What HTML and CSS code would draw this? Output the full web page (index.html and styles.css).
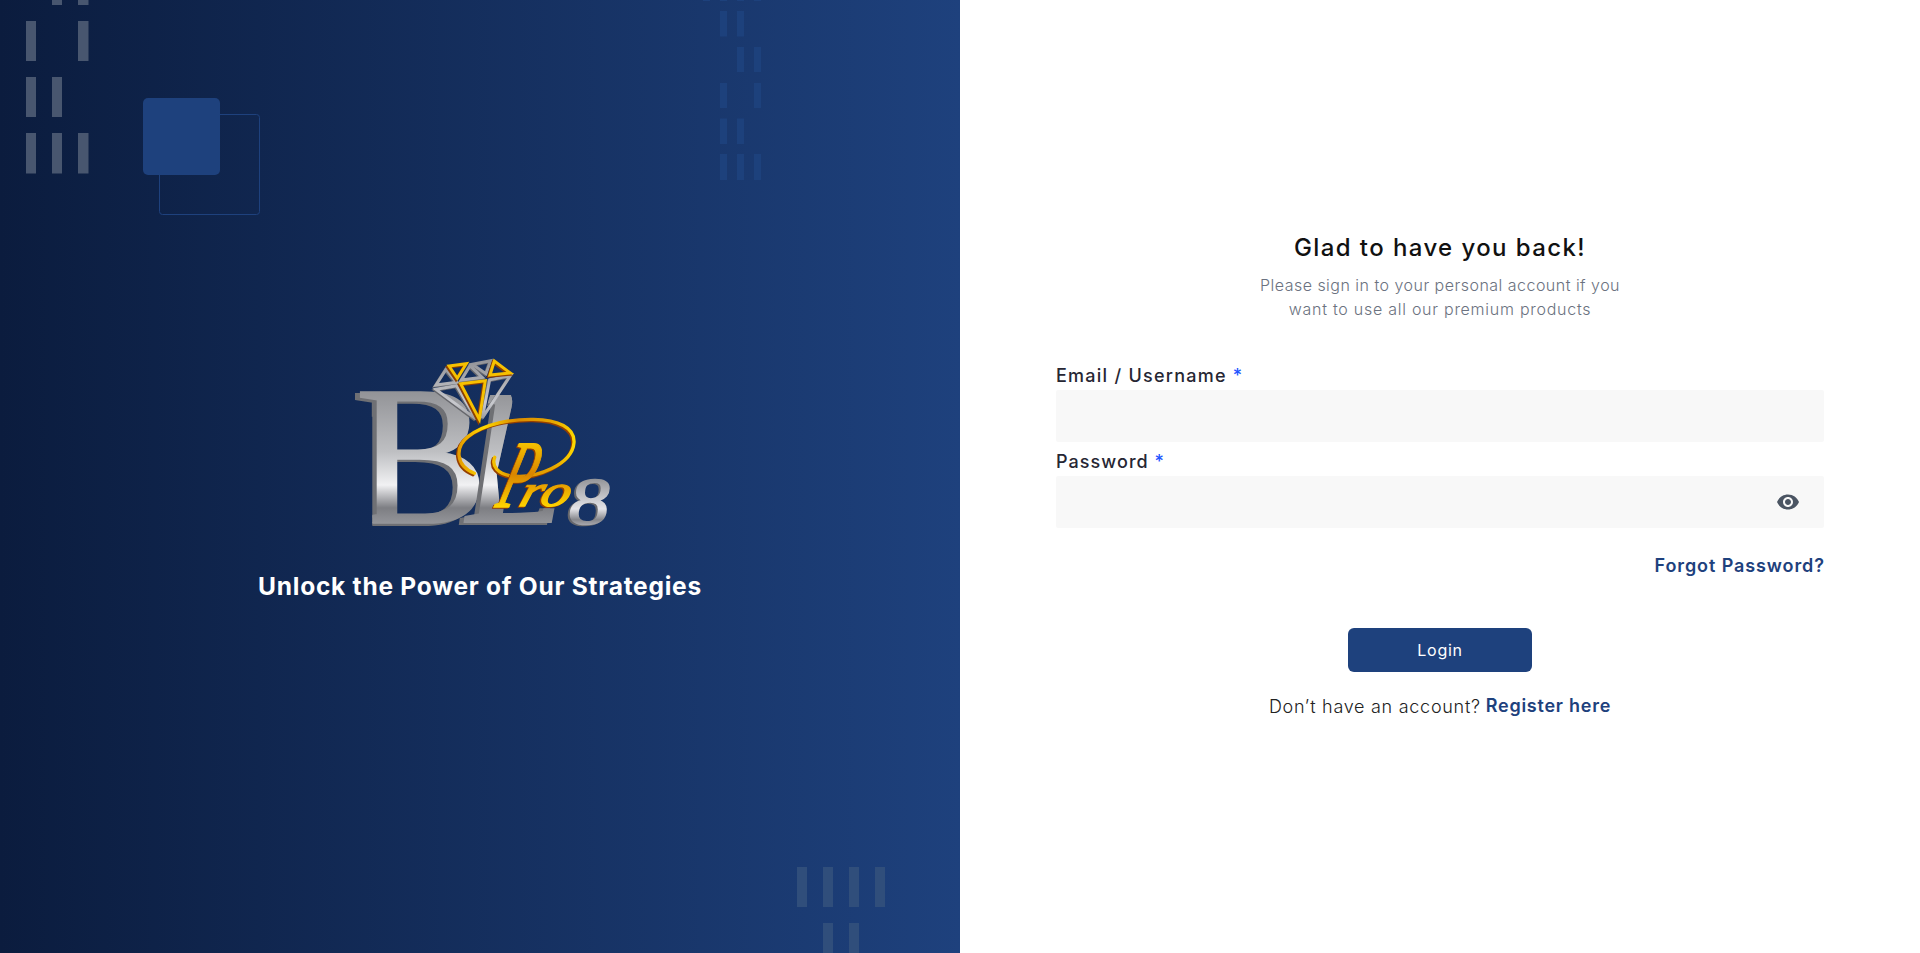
FILE: index.html
```html
<!DOCTYPE html>
<html lang="en">
<head>
<meta charset="utf-8">
<title>Login</title>
<link rel="stylesheet" href="styles.css">
</head>
<body>
<main class="page">
  <section class="brand">
    <svg class="decor" width="960" height="953" viewBox="0 0 960 953" aria-hidden="true">
      <g fill="#48566f">
        <path d="M52 0h10v5h-10zM78 0h10.500v5h-10.500zM26 21h10v40h-10zM78 21h10.500v40h-10.500zM26 77h10v40h-10zM52 77h10v40h-10zM26 133h10v40.500h-10zM52 133h10v40.500h-10zM78 133h10.500v40.500h-10.500z"/>
      </g>
      <rect x="159.500" y="114.500" width="100" height="100" rx="3" fill="none" stroke="#1e417d"/>
      <rect x="143" y="98" width="77" height="77" rx="5" fill="#1e417d"/>
      <path fill="#1d417c" d="M703 0h7v1h-7zM720 0h7v1h-7zM737 0h7v1h-7zM754 0h7v1h-7zM720 11h7v25.500h-7zM737 11h7v25.500h-7zM737 47h7v25h-7zM754 47h7v25h-7zM720 83h7v25h-7zM754 83h7v25h-7zM720 118.500h7v25.500h-7zM737 118.500h7v25.500h-7zM720 154h7v26h-7zM737 154h7v26h-7zM754 154h7v26h-7z"/>
      <path fill="#304e7b" d="M797 867h10v40h-10zM823 867h10v40h-10zM849 867h10v40h-10zM875 867h10v40h-10zM823 923h10v30h-10zM849 923h10v30h-10z"/>
    </svg>
    <svg class="logo" width="280" height="200" viewBox="0 0 840 600" role="img" aria-label="BL Pro 8">
      <defs>
        <linearGradient id="steel" gradientUnits="userSpaceOnUse" x1="0" y1="153" x2="0" y2="556">
          <stop offset="0" stop-color="#929397"/>
          <stop offset=".45" stop-color="#bebfc2"/>
          <stop offset=".7" stop-color="#f1f1f3"/>
          <stop offset=".87" stop-color="#7d7e83"/>
          <stop offset="1" stop-color="#97989c"/>
        </linearGradient>
        <linearGradient id="steel-8" gradientUnits="userSpaceOnUse" x1="0" y1="415" x2="0" y2="556">
          <stop offset="0" stop-color="#929397"/>
          <stop offset=".65" stop-color="#e4e4e8"/>
          <stop offset=".88" stop-color="#85868b"/>
          <stop offset="1" stop-color="#aaaab0"/>
        </linearGradient>
        <linearGradient id="gem" gradientUnits="userSpaceOnUse" x1="0" y1="60" x2="0" y2="245">
          <stop offset="0" stop-color="#929398"/>
          <stop offset=".7" stop-color="#c8c9ce"/>
          <stop offset="1" stop-color="#929398"/>
        </linearGradient>
        <linearGradient id="gold" gradientUnits="userSpaceOnUse" x1="355" y1="0" x2="705" y2="0">
          <stop offset="0" stop-color="#e39a00"/>
          <stop offset=".22" stop-color="#ffd800"/>
          <stop offset=".5" stop-color="#d98a00"/>
          <stop offset=".82" stop-color="#e6a800"/>
          <stop offset="1" stop-color="#ffd900"/>
        </linearGradient>
        <linearGradient id="gold-v" gradientUnits="userSpaceOnUse" x1="0" y1="305" x2="0" y2="500">
          <stop offset="0" stop-color="#f6c400"/>
          <stop offset=".5" stop-color="#d98500"/>
          <stop offset="1" stop-color="#ffd400"/>
        </linearGradient>
        <clipPath id="b-cut"><path d="M30 140H430V570H97V230H30Z"/></clipPath>
        <clipPath id="l-cut"><path d="M340 570L440 200L455 150H500Q522 165 515 200L470 400L480 505H670V570Z"/></clipPath>
      </defs>
      <g class="letter-b" clip-path="url(#b-cut)">
        <text x="31" y="556" fill="#6f7074" stroke="#6f7074" stroke-width="6">B</text>
        <text x="45" y="548" fill="url(#steel)" stroke="url(#steel)" stroke-width="5">B</text>
      </g>
      <g class="letter-l" clip-path="url(#l-cut)">
        <text x="360" y="556" textLength="305" lengthAdjust="spacingAndGlyphs" fill="#6f7074">L</text>
        <text x="374" y="548" textLength="305" lengthAdjust="spacingAndGlyphs" fill="url(#steel)">L</text>
      </g>
      <g class="facets" stroke="#66676c" transform="translate(-3 3)">
        <path d="M318 88L288 135L350 127ZM390 77L364 120L427 112ZM397 73L452 62L438 101ZM288 148L350 137L408 237ZM449 119L511 107L427 234Z"/>
      </g>
      <g class="facets" stroke="url(#gem)">
        <path d="M318 88L288 135L350 127ZM390 77L364 120L427 112ZM397 73L452 62L438 101ZM288 148L350 137L408 237ZM449 119L511 107L427 234Z"/>
      </g>
      <g class="facets" stroke="#8e3f00" transform="translate(-4 4)">
        <path d="M327 78L379 71L352 115ZM463 63L450 105L511 99ZM362 131L436 122L418 238Z"/>
      </g>
      <g class="facets" stroke="#f6c000">
        <path d="M327 78L379 71L352 115ZM463 63L450 105L511 99ZM362 131L436 122L418 238Z"/>
      </g>
      <g class="swash">
        <path stroke="#963f00" transform="translate(-4 4)" d="M403 400C345 376 345 320 385 289C435 250 515 237 580 238C655 239 705 263 702 308C697 373 590 417 515 408C473 402 454 378 464 352"/>
        <path stroke="url(#gold)" d="M403 400C345 376 345 320 385 289C435 250 515 237 580 238C655 239 705 263 702 308C697 373 590 417 515 408C473 402 454 378 464 352"/>
      </g>
      <g class="script" fill="#963f00" stroke="#963f00" transform="translate(-4 4) translate(0 500) skewX(-17) translate(0 -500)">
        <text class="script-p" x="462" y="500" textLength="100" lengthAdjust="spacingAndGlyphs">P</text>
        <text class="script-ro" x="532" y="498" textLength="150" lengthAdjust="spacingAndGlyphs">ro</text>
      </g>
      <g class="script" fill="url(#gold-v)" stroke="url(#gold-v)" transform="translate(0 500) skewX(-17) translate(0 -500)">
        <text class="script-p" x="462" y="500" textLength="100" lengthAdjust="spacingAndGlyphs">P</text>
        <text class="script-ro" x="532" y="498" textLength="150" lengthAdjust="spacingAndGlyphs">ro</text>
      </g>
      <g class="digit">
        <text x="681" y="556" textLength="122" lengthAdjust="spacingAndGlyphs" fill="#66676c" stroke="#66676c">8</text>
        <text x="687" y="552" textLength="122" lengthAdjust="spacingAndGlyphs" fill="url(#steel-8)" stroke="url(#steel-8)">8</text>
      </g>
    </svg>
    <h2 class="tagline">Unlock the Power of Our Strategies</h2>
  </section>
  <section class="panel">
    <form class="form">
      <h1 class="title">Glad to have you back!</h1>
      <p class="intro"><span class="intro-a">Please sign in to your personal account if you</span><br><span class="intro-b">want to use all our premium products</span></p>
      <label class="label label-email" for="email">Email / Username <span class="star">*</span></label>
      <div class="field"><input class="input" id="email" type="text"></div>
      <label class="label label-pass" for="password">Password <span class="star">*</span></label>
      <div class="field">
        <input class="input" id="password" type="password">
        <svg class="eye" width="24" height="24" viewBox="0 0 24 24"><path d="M12 4.500C7 4.500 2.730 7.610 1 12c1.730 4.390 6 7.500 11 7.500s9.270-3.110 11-7.500c-1.730-4.390-6-7.500-11-7.500zM12 17c-2.760 0-5-2.240-5-5s2.240-5 5-5 5 2.240 5 5-2.240 5-5 5zm0-8c-1.660 0-3 1.340-3 3s1.340 3 3 3 3-1.340 3-3-1.340-3-3-3z"/></svg>
      </div>
      <a class="forgot">Forgot Password?</a>
      <button class="login" type="button">Login</button>
      <p class="signup"><span class="ask">Don’t have an account?</span><a class="register">Register here</a></p>
    </form>
  </section>
</main>
</body>
</html>
```
FILE: styles.css
```css
* { box-sizing: border-box; }
body { margin: 0; font-family: Inter, "Open Sans", sans-serif; background: #fff; }
h1, h2, p { margin: 0; }
.page { display: grid; grid-template-columns: 1fr 1fr; height: 953px; overflow: hidden; }
.brand {
  position: relative; display: flex; flex-direction: column; align-items: center;
  padding-top: 340px; overflow: hidden;
  background: linear-gradient(90deg, #0b1c3e 0%, #1e417d 100%);
}
.decor { position: absolute; inset: 0; }
.logo { position: relative; display: block; flex: none; overflow: visible; }
.tagline { position: relative; margin-top: 31px; font-size: 24.5px; line-height: 30px; font-weight: 700; color: #fff; white-space: nowrap; letter-spacing: 0.75px; }

.letter-b { font: 600px "Liberation Serif", serif; }
.letter-l { font: italic bold 585px "Liberation Serif", serif; }
.digit { font: italic 205px "Liberation Serif", serif; stroke-width: 5; }
.facets { fill: none; stroke-width: 9; stroke-linejoin: miter; }
.swash { fill: none; stroke-width: 10; stroke-linecap: round; }
.script { font-family: "Liberation Serif", serif; font-style: italic; stroke-width: 4; }
.script-p { font-size: 290px; }
.script-ro { font-size: 135px; }

.panel { display: flex; justify-content: center; padding-top: 232px; }
.form { display: flex; flex-direction: column; width: 768px; }
.title { font-size: 24px; line-height: 32px; font-weight: 500; letter-spacing: 1.4px; text-align: center; color: #111; }
.intro { margin-top: 9px; font-size: 16px; line-height: 24px; font-weight: 300; text-align: center; color: #6b7280; white-space: nowrap; }
.intro-a { letter-spacing: 0.48px; }
.intro-b { letter-spacing: 0.74px; }
.label { font-size: 18px; line-height: 28px; font-weight: 500; color: #262633; white-space: nowrap; }
.label-email { margin-top: 41px; letter-spacing: 1.25px; }
.label-pass { margin-top: 6px; letter-spacing: 1.05px; }
.star { color: #2255ff; }
.field { display: flex; align-items: center; height: 52px; padding-right: 24px; background: #f8f8f8; border-radius: 2px; }
.input { flex: 1; height: 52px; padding: 0 16px; border: 0; outline: 0; background: transparent; font: inherit; }
.eye { display: block; fill: #4b5563; }
.forgot { align-self: flex-end; margin: 24px -0.9px 0 0; font-size: 18px; line-height: 28px; font-weight: 600; letter-spacing: 0.9px; color: #1e417d; }
.login { align-self: center; width: 184px; height: 44px; margin-top: 48px; padding: 0; border: 0; border-radius: 6px; background: #1e417d; color: #fff; font: 400 16px/44px Inter, sans-serif; letter-spacing: 0.7px; }
.signup { display: flex; justify-content: center; gap: 5px; margin-top: 20px; font-size: 18px; line-height: 28px; color: #222; white-space: nowrap; }
.ask { padding-top: 1px; font-weight: 300; letter-spacing: 0.72px; }
.register { font-weight: 600; letter-spacing: 0.75px; color: #1e417d; }
```
